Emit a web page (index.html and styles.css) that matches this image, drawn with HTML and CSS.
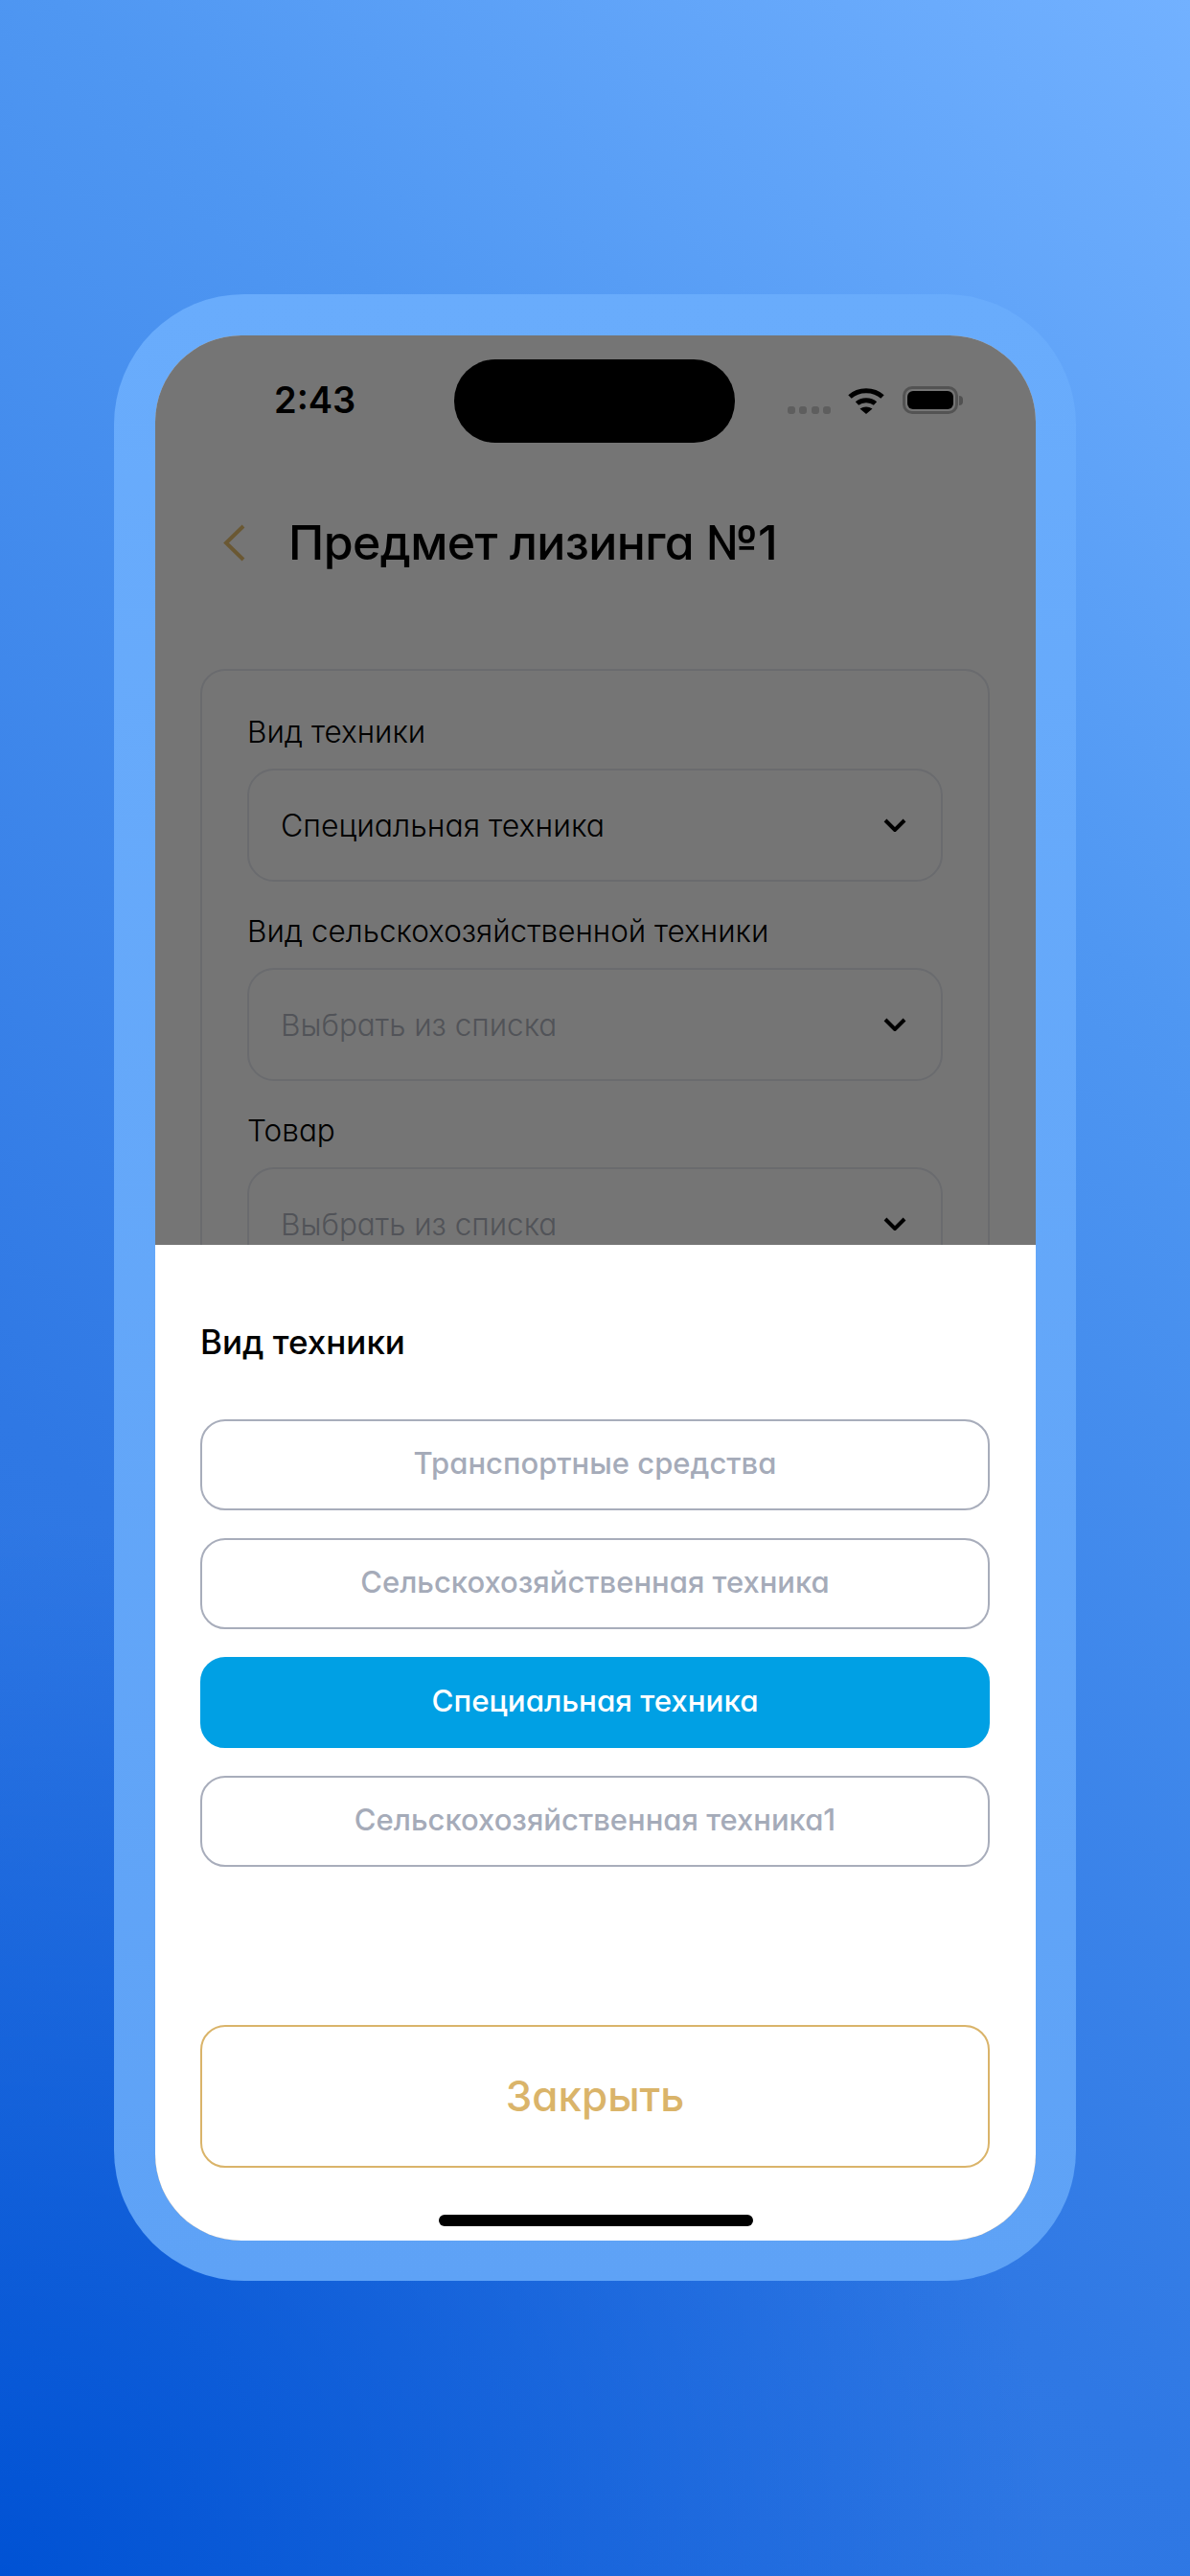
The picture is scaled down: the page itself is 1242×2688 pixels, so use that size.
FILE: index.html
```html
<!DOCTYPE html>
<html lang="ru">
<head>
<meta charset="utf-8">
<title>Предмет лизинга №1</title>
<link rel="stylesheet" href="styles.css">
</head>
<body>
<main class="phone">
  <div class="screen">
    <header class="status">
      <span class="time">2:43</span>
      <span class="island"></span>
      <div class="status-icons">
        <span class="dots"><i></i><i></i><i></i><i></i></span>
        <svg class="wifi" viewBox="0 0 40 29" aria-hidden="true"><path d="M3 11C12 2.500 28 2.500 37 11" fill="none" stroke="#000" stroke-width="5"/><path d="M10.500 18C15.500 13.500 24.500 13.500 29.500 18" fill="none" stroke="#000" stroke-width="5"/><path d="M13.500 23.500Q20 19.500 26.500 23.500L20 29Z" fill="#000"/></svg>
        <span class="battery"><span class="battery-fill"></span></span>
        <span class="battery-nub"></span>
      </div>
    </header>
    <div class="nav">
      <svg class="back" viewBox="0 0 24 40" aria-hidden="true"><path d="M22 3L4 20.500L22 38" fill="none" stroke="#e8c070" stroke-width="4"/></svg>
      <h1 class="page-title">Предмет лизинга №1</h1>
    </div>
    <section class="card">
      <div class="field">
        <span class="label">Вид техники</span>
        <div class="select filled"><span>Специальная техника</span><svg class="chev" viewBox="0 0 24 14" aria-hidden="true"><path d="M2 2L12 12L22 2" fill="none" stroke="#000" stroke-width="4"/></svg></div>
      </div>
      <div class="field">
        <span class="label">Вид сельскохозяйственной техники</span>
        <div class="select empty"><span>Выбрать из списка</span><svg class="chev" viewBox="0 0 24 14" aria-hidden="true"><path d="M2 2L12 12L22 2" fill="none" stroke="#000" stroke-width="4"/></svg></div>
      </div>
      <div class="field">
        <span class="label">Товар</span>
        <div class="select empty"><span>Выбрать из списка</span><svg class="chev" viewBox="0 0 24 14" aria-hidden="true"><path d="M2 2L12 12L22 2" fill="none" stroke="#000" stroke-width="4"/></svg></div>
      </div>
    </section>
    <div class="dim"></div>
    <section class="sheet">
      <h2 class="sheet-title">Вид техники</h2>
      <div class="options">
        <button class="option">Транспортные средства</button>
        <button class="option">Сельскохозяйственная техника</button>
        <button class="option selected">Специальная техника</button>
        <button class="option">Сельскохозяйственная техника1</button>
      </div>
      <button class="close">Закрыть</button>
      <span class="home"></span>
    </section>
  </div>
</main>
</body>
</html>
```
FILE: styles.css
```css
* { box-sizing: border-box; }
html, body { margin: 0; height: 2688px; }
body {
  width: 1242px;
  overflow: hidden;
  padding-top: 307px;
  display: flex;
  justify-content: center;
  align-items: flex-start;
  font-family: Inter, "Noto Sans", sans-serif;
  font-feature-settings: "cv11";
  background:
    radial-gradient(1100px 1100px at 0 2688px, #0052d4 0%, rgba(0,82,212,0) 100%),
    linear-gradient(222deg, #72b1ff 0%, #4f97f2 28%, #2f78e4 68%, #2a72e0 100%);
}
.phone {
  width: 1004px;
  height: 2073px;
  padding: 43px 42px 42px 43px;
  border-radius: 136px;
  background: linear-gradient(180deg, #69acfc, #5ea2f6);
}
.screen {
  position: relative;
  width: 919px;
  height: 1988px;
  border-radius: 90px;
  overflow: hidden;
  background: #fff;
}
.status {
  display: flex;
  align-items: flex-start;
  height: 112px;
  padding: 25px 76px 0 124px;
}
.time {
  width: 188px;
  margin-top: 19px;
  font-size: 38px;
  line-height: 46px;
  font-weight: 600;
  color: #000;
}
.island {
  width: 293px;
  height: 87px;
  border-radius: 43px;
  background: #000;
}
.status-icons {
  display: flex;
  align-items: flex-start;
  margin-left: auto;
  margin-top: 28px;
}
.dots { display: flex; gap: 4.500px; margin-top: 21px; }
.dots i { width: 8px; height: 8px; border-radius: 3px; background: #ccc; }
.wifi { width: 40px; height: 29px; margin-left: 17px; }
.battery {
  width: 58px;
  height: 29px;
  margin-left: 18px;
  padding: 2px;
  border: 3px solid #b5b5b5;
  border-radius: 10px;
}
.battery-fill { display: block; height: 100%; border-radius: 6px; background: #000; }
.battery-nub { width: 4px; height: 10px; margin: 10px 0 0 1px; border-radius: 0 4px 4px 0; background: #b0b0b0; }
.nav {
  display: flex;
  align-items: center;
  height: 60px;
  margin-top: 74px;
  padding-left: 70px;
}
.back { width: 24px; height: 40px; flex: none; }
.page-title {
  margin: 0 0 0 45px;
  font-size: 50px;
  line-height: 60px;
  font-weight: 500;
  letter-spacing: -0.6px;
  color: #000;
}
.card {
  margin: 102px 48px 0 47px;
  padding: 42px 47px 60px;
  border: 2px solid #e6e9f0;
  border-radius: 26px;
  display: flex;
  flex-direction: column;
  gap: 30px;
  height: 900px;
}
.field { display: flex; flex-direction: column; gap: 16px; }
.label { font-size: 31.500px; line-height: 44px; font-weight: 300; color: #000; }
.select {
  display: flex;
  align-items: center;
  justify-content: space-between;
  height: 118px;
  padding: 0 36px 0 33px;
  border: 2px solid #e6e9f0;
  border-radius: 28px;
  font-size: 31.500px;
  font-weight: 300;
  color: #000;
}
.select.filled { font-size: 32px; }
.select.empty { color: #b1b5c0; }
.chev { width: 24px; height: 14px; flex: none; }
.dim {
  position: absolute;
  inset: 0;
  background: rgba(0, 0, 0, 0.54);
}
.sheet {
  position: absolute;
  left: 0;
  right: 0;
  bottom: 0;
  height: 1039px;
  padding: 0 48px 76px 47px;
  background: #fff;
  display: flex;
  flex-direction: column;
}
.sheet-title {
  margin: 76px 0 0;
  font-size: 35px;
  line-height: 50px;
  font-weight: 500;
  color: #000;
}
.options {
  display: flex;
  flex-direction: column;
  gap: 29px;
  margin-top: 56px;
}
.option {
  height: 95px;
  padding: 0 0 4px;
  border: 2.500px solid #a8adbb;
  border-radius: 26px;
  background: #fff;
  font: inherit;
  font-feature-settings: inherit;
  font-size: 31px;
  font-weight: 500;
  color: #a5abb9;
}
.option.selected {
  border-color: #00a0e4;
  background: #00a0e4;
  color: #fff;
  font-size: 31.300px;
}
.close {
  height: 149px;
  margin-top: auto;
  padding: 0 0 2px;
  border: 2px solid #dab46a;
  border-radius: 26px;
  background: #fff;
  font: inherit;
  font-feature-settings: inherit;
  font-size: 44px;
  font-weight: 500;
  color: #dab46a;
}
.home {
  position: absolute;
  left: 296px;
  bottom: 15px;
  width: 328px;
  height: 12px;
  border-radius: 6px;
  background: #000;
}
```
